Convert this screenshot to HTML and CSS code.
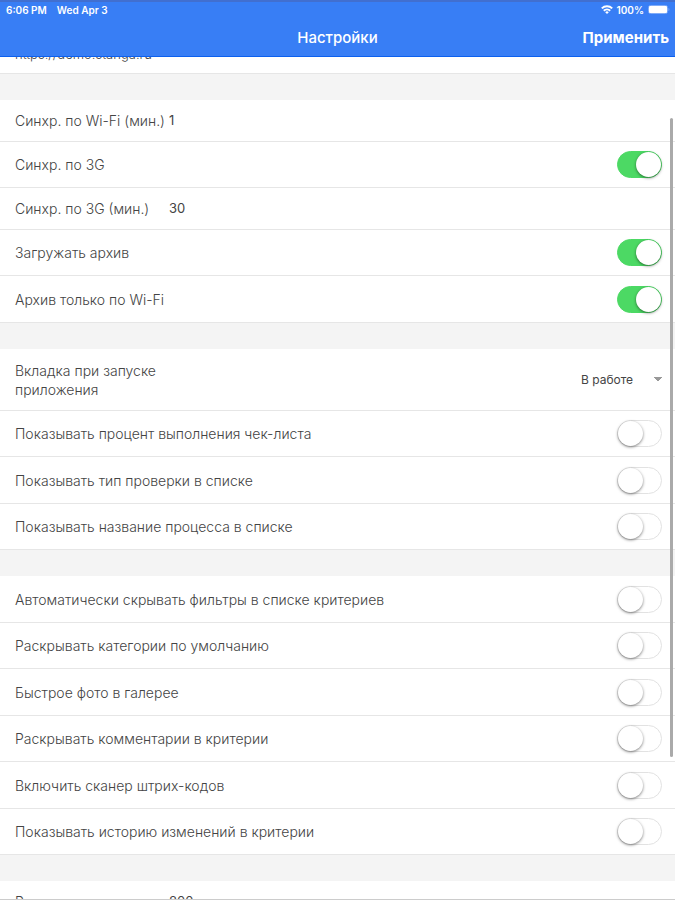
FILE: index.html
```html
<!DOCTYPE html>
<html lang="ru">
<head>
<meta charset="UTF-8" />
<meta name="viewport" content="width=device-width, initial-scale=1" />
<title>Настройки</title>
<link rel="stylesheet" href="styles.css">
</head>
<body>
  <header class="header">
    <div class="status">
      <span>6:06 PM</span>
      <span>Wed Apr 3</span>
      <div class="status-right">
        <svg class="wifi" width="12" height="9" viewBox="0 0 12 9" fill="none" stroke="#fff" stroke-width="2">
          <path d="M0.8 3.4a7.4 7.4 0 0 1 10.4 0" />
          <path d="M2.8 5.7a4.6 4.6 0 0 1 6.4 0" />
          <path d="M6 9L4.2 7.2a2.6 2.6 0 0 1 3.6 0z" fill="#fff" stroke="none" />
        </svg>
        <span>100%</span>
        <svg class="battery" width="22" height="9" viewBox="0 0 22 9">
          <rect x="0.5" y="0.5" width="19" height="8" rx="2" fill="none" stroke="#7fabf8" />
          <rect x="1" y="1" width="18" height="7" rx="1" fill="#fff" />
          <path d="M20.5 3v3c1.2-.4 1.2-2.6 0-3z" fill="#7fabf8" />
        </svg>
      </div>
    </div>
    <div class="navbar">
      <h1>Настройки</h1>
      <button type="button" class="apply">Применить</button>
    </div>
  </header>

  <main class="list">
    <section class="group group-scrolled">
      <div class="row"><a href="#server">https://demo.stanga.ru</a></div>
    </section>

    <section class="group">
      <div class="row row-text">
        <label for="wifi-min">Синхр. по Wi-Fi (мин.)</label>
        <input type="text" id="wifi-min" value="1" />
      </div>
      <div class="row">
        <label for="sync-3g">Синхр. по 3G</label>
        <input type="checkbox" class="toggle" id="sync-3g" checked />
      </div>
      <div class="row row-text">
        <label for="min-3g">Синхр. по 3G (мин.)</label>
        <input type="text" id="min-3g" value="30" />
      </div>
      <div class="row">
        <label for="archive">Загружать архив</label>
        <input type="checkbox" class="toggle" id="archive" checked />
      </div>
      <div class="row">
        <label for="archive-wifi">Архив только по Wi-Fi</label>
        <input type="checkbox" class="toggle" id="archive-wifi" checked />
      </div>
    </section>

    <section class="group">
      <div class="row row-select">
        <label for="start-tab">Вкладка при запуске приложения</label>
        <select id="start-tab">
          <option>В работе</option>
        </select>
      </div>
      <div class="row">
        <label for="show-percent">Показывать процент выполнения чек-листа</label>
        <input type="checkbox" class="toggle" id="show-percent" />
      </div>
      <div class="row">
        <label for="show-type">Показывать тип проверки в списке</label>
        <input type="checkbox" class="toggle" id="show-type" />
      </div>
      <div class="row">
        <label for="show-process">Показывать название процесса в списке</label>
        <input type="checkbox" class="toggle" id="show-process" />
      </div>
    </section>

    <section class="group">
      <div class="row">
        <label for="hide-filters">Автоматически скрывать фильтры в списке критериев</label>
        <input type="checkbox" class="toggle" id="hide-filters" />
      </div>
      <div class="row">
        <label for="open-categories">Раскрывать категории по умолчанию</label>
        <input type="checkbox" class="toggle" id="open-categories" />
      </div>
      <div class="row">
        <label for="quick-photo">Быстрое фото в галерее</label>
        <input type="checkbox" class="toggle" id="quick-photo" />
      </div>
      <div class="row">
        <label for="open-comments">Раскрывать комментарии в критерии</label>
        <input type="checkbox" class="toggle" id="open-comments" />
      </div>
      <div class="row">
        <label for="scanner">Включить сканер штрих-кодов</label>
        <input type="checkbox" class="toggle" id="scanner" />
      </div>
      <div class="row">
        <label for="history">Показывать историю изменений в критерии</label>
        <input type="checkbox" class="toggle" id="history" />
      </div>
    </section>

    <section class="group">
      <div class="row row-text">
        <label for="cache-size">Размер кэша</label>
        <input type="text" id="cache-size" value="800" />
      </div>
    </section>
  </main>
  <div class="scrollbar"></div>
</body>
</html>
```

FILE: styles.css
```css
* {
  box-sizing: border-box;
}
body {
  margin: 0;
  height: 100vh;
  overflow: hidden;
  position: relative;
  display: flex;
  flex-direction: column;
  background: #f4f4f4;
  font-family: Inter, "Liberation Sans", sans-serif;
  font-size: 14px;
  font-weight: 300;
  color: #444;
}

/* Header */
.header {
  flex: none;
  background: #387ef5;
  border-top: 2px solid #416fd0;
  border-bottom: 1px solid #0c60ee;
  color: #fff;
}
.status {
  display: flex;
  align-items: center;
  gap: 10px;
  height: 15px;
  padding: 0 5px 0 6px;
  font-size: 10px;
  font-weight: 600;
}
.status-right {
  display: flex;
  align-items: center;
  gap: 4px;
  margin-left: auto;
}
.navbar {
  display: grid;
  grid-template-columns: 1fr auto 1fr;
  align-items: center;
  height: 39px;
  padding: 2px 6px 0;
}
.navbar h1 {
  grid-column: 2;
  margin: 0;
  font-size: 15px;
  font-weight: 500;
}
.apply {
  justify-self: end;
  padding: 0;
  border: none;
  background: none;
  font: inherit;
  font-size: 15px;
  font-weight: 700;
  color: #fff;
}

/* Settings list */
.list {
  flex: 1;
  min-height: 0;
  overflow: hidden;
  border-bottom: 1px solid #ccc;
}
.group {
  margin-bottom: 26px;
  background: #fff;
}
/* first group is partly scrolled under the header */
.group-scrolled {
  margin-top: -30px;
}
.group-scrolled .row {
  padding-top: 8px;
}
.row {
  display: flex;
  align-items: center;
  min-height: 46px;
  padding: 0 13px 0 15px;
  border-bottom: 1px solid #e6e6e6;
}
.row:nth-child(odd) {
  min-height: 47px;
}
.row a {
  font-size: 13px;
  color: #444;
  text-decoration: none;
}
.row input[type="text"] {
  flex: 1;
  min-width: 0;
  margin-left: 4px;
  padding: 0 0 2px;
  border: none;
  outline: none;
  background: none;
  font: inherit;
  font-size: 13px;
  font-weight: 400;
  color: #444;
}
.row.row-text {
  min-height: 42px;
}
.row-text label {
  min-width: 150px;
}
.row.row-select {
  min-height: 62px;
}
.row-select label {
  width: 160px;
  line-height: 19px;
}
select {
  appearance: none;
  margin-left: auto;
  padding: 0 28px 0 0;
  border: none;
  outline: none;
  font: inherit;
  font-size: 12px;
  font-weight: 400;
  color: #444;
  background: linear-gradient(to bottom left, #999 50%, transparent 0) right 4px center / 4px 5px no-repeat,
    linear-gradient(to bottom right, #999 50%, transparent 0) right 0 center / 4px 5px no-repeat;
}

/* iOS toggle */
.toggle {
  appearance: none;
  flex: none;
  width: 45px;
  height: 27px;
  margin: 0 0 0 auto;
  padding: 1px;
  border: 1px solid #e2e2e2;
  border-radius: 14px;
  background: #fff;
}
.toggle::before {
  content: "";
  display: block;
  width: 25px;
  height: 25px;
  margin: -1px;
  border-radius: 50%;
  background: #fff;
  box-shadow: 0 1px 3px rgba(0, 0, 0, 0.5);
}
.toggle:checked {
  border-color: #4cd964;
  background: #4cd964;
}
.toggle:checked::before {
  margin-left: 17px;
}

.scrollbar {
  position: absolute;
  top: 118px;
  right: 2px;
  width: 3px;
  height: 71%;
  border-radius: 2px;
  background: #aaa;
}
```
